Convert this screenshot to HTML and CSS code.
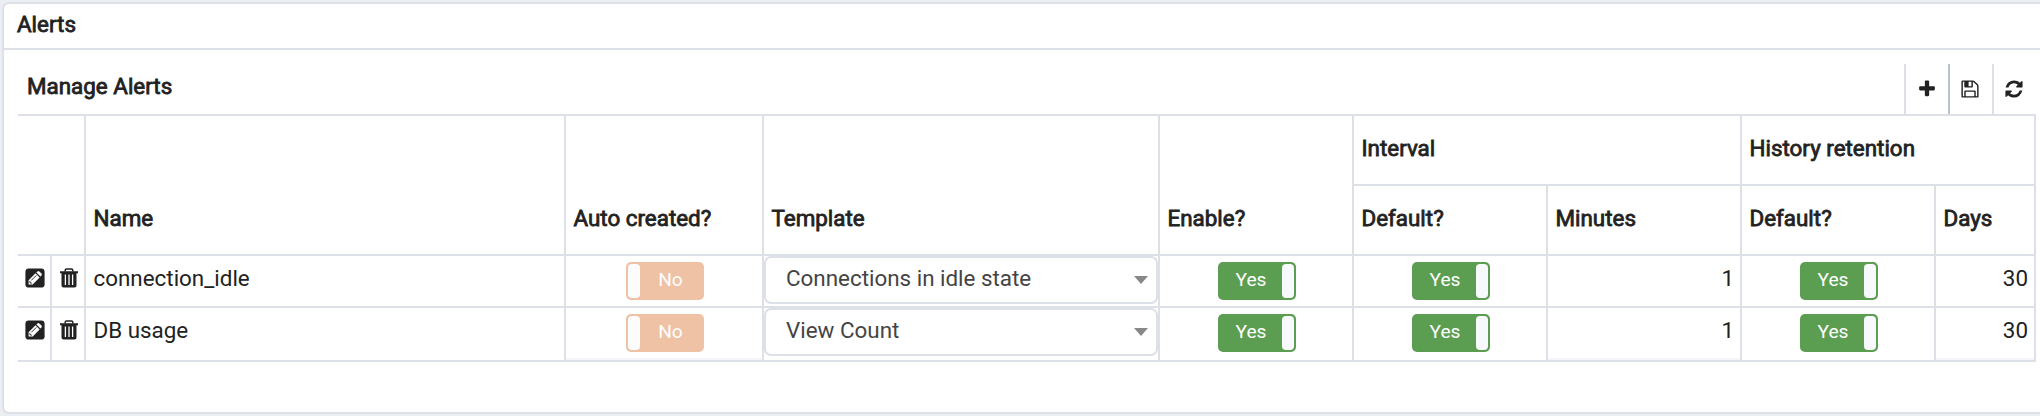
FILE: index.html
```html
<!DOCTYPE html>
<html lang="en">
<head>
<meta charset="utf-8">
<title>Alerts</title>
<link rel="stylesheet" href="styles.css">
</head>
<body>
<svg class="defs" width="0" height="0" aria-hidden="true">
  <symbol id="plus" viewBox="0 0 1792 1792"><path d="M1600 736v192q0 40-28 68t-68 28h-416v416q0 40-28 68t-68 28h-192q-40 0-68-28t-28-68v-416h-416q-40 0-68-28t-28-68v-192q0-40 28-68t68-28h416v-416q0-40 28-68t68-28h192q40 0 68 28t28 68v416h416q40 0 68 28t28 68z"/></symbol>
  <symbol id="save" viewBox="0 0 1792 1792"><path d="M512 1536h768v-384h-768v384zm896 0h128v-896q0-14-10-38.5t-20-34.5l-281-281q-10-10-34-20t-39-10v416q0 40-28 68t-68 28h-576q-40 0-68-28t-28-68v-416h-128v1280h128v-416q0-40 28-68t68-28h832q40 0 68 28t28 68v416zm-384-928v-320q0-13-9.500-22.500t-22.500-9.500h-192q-13 0-22.500 9.500t-9.500 22.500v320q0 13 9.500 22.500t22.500 9.500h192q13 0 22.500-9.500t9.500-22.500zm640 32v928q0 40-28 68t-68 28h-1344q-40 0-68-28t-28-68v-1344q0-40 28-68t68-28h928q40 0 88 20t76 48l280 280q28 28 48 76t20 88z"/></symbol>
  <symbol id="refresh" viewBox="0 0 1792 1792"><path d="M1639 1056q0 5-1 7-64 268-268 434.500t-478 166.500q-146 0-282.500-55t-243.500-157l-129 129q-19 19-45 19t-45-19-19-45v-448q0-26 19-45t45-19h448q26 0 45 19t19 45-19 45l-137 137q71 66 161 102t187 36q134 0 250-65t186-179q11-17 53-117 8-23 30-23h192q13 0 22.500 9.500t9.500 22.500zm25-800v448q0 26-19 45t-45 19h-448q-26 0-45-19t-19-45 19-45l138-138q-148-137-349-137-134 0-250 65t-186 179q-11 17-53 117-8 23-30 23h-199q-13 0-22.500-9.500t-9.500-22.500v-7q65-268 270-434.500t480-166.500q146 0 284 55.500t245 156.500l130-129q19-19 45-19t45 19 19 45z"/></symbol>
  <symbol id="edit" viewBox="0 0 20 20"><rect x=".4" y=".4" width="19.200" height="19.200" rx="3.400"/><path fill="#fff" d="M3.600 16.400v-4.200l6.900-6.900 4.100 4.100-6.900 7zM11.400 4.500l1.100-1.100q.9-.7 1.800 0l2.200 2.200q.8.900 0 1.800l-1.100 1.200z"/><path fill="none" stroke="#222" stroke-width=".9" d="M6.300 12.400l5-5M4.700 13.300v1h1v1h1"/></symbol>
  <symbol id="trash" viewBox="0 0 18 20"><path d="M0 3.200h18v2h-1.500v12.300q0 2.100-2 2.100h-11q-2 0-2-2.100V5.200H0z"/><path fill="none" stroke="#222" stroke-width="1.500" d="M5.200 3.500V2.200q0-1.200 1.200-1.200h5.200q1.200 0 1.200 1.200v1.300"/><path fill="none" stroke="#fff" stroke-width="1.300" d="M5.400 6.500v10.500M9 6.500v10.500M12.600 6.500v10.500"/></symbol>
</svg>
<main class="panel">
  <header class="panel-title"><span class="strong">Alerts</span></header>
  <div class="toolbar">
    <span class="strong toolbar-title">Manage Alerts</span>
    <div class="tool tool-add"><svg class="tool-icon"><use href="#plus"/></svg></div>
    <div class="tool tool-dark"><svg class="tool-icon"><use href="#save"/></svg></div>
    <div class="tool"><svg class="tool-icon"><use href="#refresh"/></svg></div>
  </div>
  <section class="grid">
    <div class="head tall actions"></div>
    <div class="head tall strong">Name</div>
    <div class="head tall strong">Auto created?</div>
    <div class="head tall strong">Template</div>
    <div class="head tall strong">Enable?</div>
    <div class="head wide strong">Interval</div>
    <div class="head wide strong">History retention</div>
    <div class="head strong">Default?</div>
    <div class="head strong">Minutes</div>
    <div class="head strong">Default?</div>
    <div class="head strong">Days</div>

    <div class="cell icon-cell"><svg class="edit"><use href="#edit"/></svg></div>
    <div class="cell icon-cell"><svg class="trash"><use href="#trash"/></svg></div>
    <div class="cell text">connection_idle</div>
    <div class="cell switch-cell auto"><div class="switch off"><span class="knob"></span><span class="label">No</span></div></div>
    <div class="cell"><div class="select"><span>Connections in idle state</span><i class="caret"></i></div></div>
    <div class="cell switch-cell"><div class="switch"><span class="label">Yes</span><span class="knob"></span></div></div>
    <div class="cell switch-cell"><div class="switch"><span class="label">Yes</span><span class="knob"></span></div></div>
    <div class="cell text number">1</div>
    <div class="cell switch-cell"><div class="switch"><span class="label">Yes</span><span class="knob"></span></div></div>
    <div class="cell text number">30</div>

    <div class="cell icon-cell"><svg class="edit"><use href="#edit"/></svg></div>
    <div class="cell icon-cell"><svg class="trash"><use href="#trash"/></svg></div>
    <div class="cell text">DB usage</div>
    <div class="cell switch-cell auto tinted"><div class="switch off"><span class="knob"></span><span class="label">No</span></div></div>
    <div class="cell"><div class="select"><span>View Count</span><i class="caret"></i></div></div>
    <div class="cell switch-cell"><div class="switch"><span class="label">Yes</span><span class="knob"></span></div></div>
    <div class="cell switch-cell"><div class="switch"><span class="label">Yes</span><span class="knob"></span></div></div>
    <div class="cell text number tinted">1</div>
    <div class="cell switch-cell"><div class="switch"><span class="label">Yes</span><span class="knob"></span></div></div>
    <div class="cell text number tinted">30</div>
  </section>
</main>
</body>
</html>
```

FILE: styles.css
```css
* { box-sizing: border-box; }
html { overflow: hidden; }
body {
  margin: 0;
  padding: 2px 0 0 2px;
  height: 416px;
  overflow: hidden;
  background: #ebeef3;
  color: #222;
  font: 22.4px/30px Roboto, sans-serif;
}
.defs { display: block; height: 0; }
svg { display: block; fill: #222; }
.panel {
  width: 2060px;
  height: 412px;
  background: #fff;
  border: 2px solid #dde0e6;
  border-radius: 7px;
}
.strong { -webkit-text-stroke: 0.8px #222; }
.panel-title {
  height: 46px;
  padding: 5px 0 0 13px;
  border-bottom: 2px solid #dde0e6;
}
.toolbar {
  display: flex;
  width: 2032px;
  height: 64px;
  padding: 14px 0 0 23px;
}
.toolbar-title { flex: 1; padding-top: 7px; }
.tool {
  width: 44px;
  border-left: 2px solid #dde0e6;
  padding: 15px 0 0 10px;
}
.tool-add { padding-left: 11px; }
.tool-dark { border-color: #bac0cd; }
.tool-icon { width: 20px; height: 20px; }
.grid {
  display: grid;
  width: 2018px;
  margin-left: 14px;
  grid-template-columns: 34px 34px 480px 198px 396px 194px 194px 194px 194px 100px;
  grid-template-rows: 70px 70px 52px 54px;
  border-top: 2px solid #dde0e6;
}
.head {
  display: flex;
  align-items: flex-end;
  padding: 0 7px 21px 7.5px;
  border-right: 2px solid #dde0e6;
  border-bottom: 2px solid #dde0e6;
}
.tall { grid-row: span 2; }
.wide, .actions { grid-column: span 2; }
.cell {
  border-right: 2px solid #dde0e6;
  border-bottom: 2px solid #dde0e6;
}
.text { padding: 7px 7px 0 7.5px; }
.number { padding-right: 6px; text-align: right; }
.tinted { box-shadow: inset 0 -2px #f3f5f8; }
.icon-cell { padding: 12px 0 0 7px; }
.icon-cell .trash { margin-left: 1px; }
.edit { width: 20px; height: 20px; }
.trash { width: 18px; height: 20px; }
.switch-cell { padding: 6px 0 0 58px; }
.auto { padding-left: 60px; }
.switch {
  display: flex;
  width: 78px;
  height: 38px;
  padding: 2px;
  border-radius: 5px;
  background: #5c9e51;
  color: #fff;
  font-size: 19.2px;
  line-height: 32px;
}
.off { background: #efc2a6; }
.label { flex: 1; text-align: center; }
.off .label { padding-right: 1px; }
.knob { width: 12px; border-radius: 4px; background: #f8f9fc; }
.off .knob { background: #fcfcfc; }
.select {
  display: flex;
  justify-content: space-between;
  height: 48px;
  padding: 5px 8px 0 20px;
  border: 2px solid #dde0e6;
  border-radius: 7px;
  color: #444;
}
.caret {
  width: 14px;
  height: 8px;
  margin-top: 13px;
  background: #888;
  clip-path: polygon(0 0, 100% 0, 50% 100%);
}
```
